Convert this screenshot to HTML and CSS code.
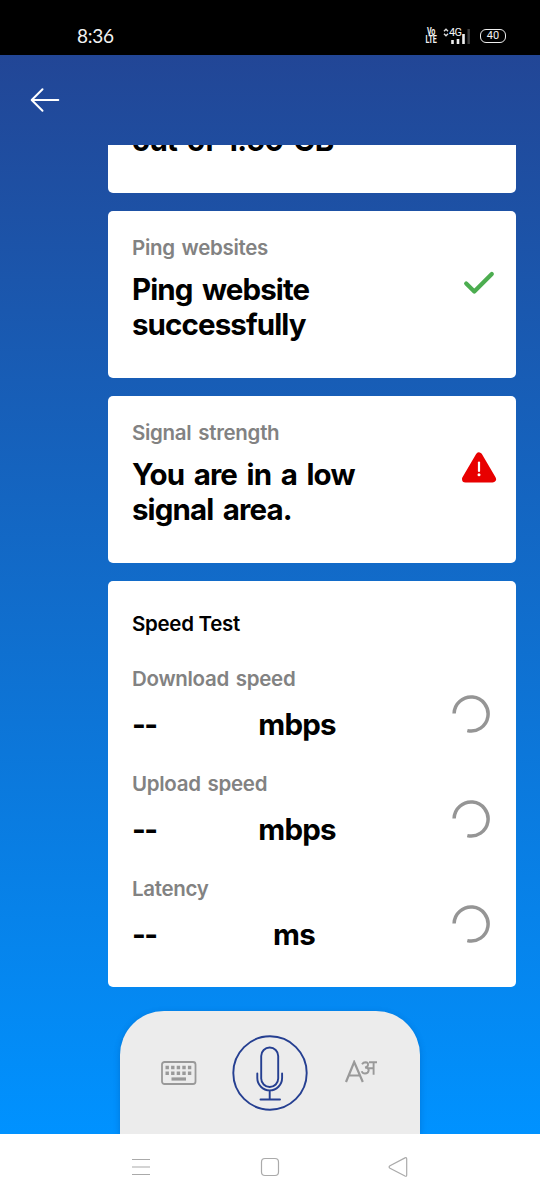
FILE: index.html
```html
<!DOCTYPE html>
<html lang="en">
<head>
<meta charset="utf-8">
<title>Network check</title>
<link rel="stylesheet" href="styles.css">
</head>
<body>
<div class="phone">
  <header class="status">
    <span class="clock">8:36</span>
    <div class="indicators">
      <span class="volte"><span>Vo</span><span>LTE</span></span>
      <div class="signal">
        <svg class="updown" width="6" height="9" viewBox="0 0 6 9"><path d="M1 3.2 3 1.2 5 3.2M1 5.8 3 7.8 5 5.8" fill="none" stroke="#ddd" stroke-width="1.4"/></svg>
        <span class="net">4G</span>
        <svg class="bars" width="20" height="15" viewBox="0 0 20 15"><path d="M2.500 11v4M8 10v5M13.500 5v10" stroke="#eee" stroke-width="2.600"/><path d="M18.700 0v15" stroke="#3c3c3c" stroke-width="2.400"/></svg>
      </div>
      <div class="battery"><span class="level">40</span></div>
    </div>
  </header>

  <main class="screen">
    <nav class="topbar">
      <svg width="30" height="26" viewBox="0 0 30 26"><path d="M28.300 13H2M12.500 2.200 1.700 13 12.500 23.800" fill="none" stroke="#fff" stroke-width="2" stroke-linecap="round" stroke-linejoin="round"/></svg>
    </nav>

    <div class="feed">
      <section class="card usage"><p class="title">out of 1.50 GB</p></section>

      <section class="card result">
        <div class="copy">
          <p class="label">Ping websites</p>
          <p class="title">Ping website<br>successfully</p>
        </div>
        <svg class="check" width="32" height="26" viewBox="0 0 32 26"><path d="M3.200 13.500 11.300 21.600 28.800 4" fill="none" stroke="#4cad50" stroke-width="4.200" stroke-linecap="round" stroke-linejoin="round"/></svg>
      </section>

      <section class="card result">
        <div class="copy">
          <p class="label">Signal strength</p>
          <p class="title">You are in a low<br>signal area.</p>
        </div>
        <svg class="alert" width="34" height="31" viewBox="0 0 34 31"><path d="M17 4 30.500 27H3.500Z" fill="#e80000" stroke="#e80000" stroke-width="7" stroke-linejoin="round"/><path d="M17 10.500v8.500" stroke="#fff" stroke-width="2.200" stroke-linecap="round"/><circle cx="17" cy="22.800" r="1.500" fill="#fff"/></svg>
      </section>

      <section class="card speed">
        <h2 class="heading">Speed Test</h2>
        <div class="metric">
          <div class="reading"><p class="label">Download speed</p><p class="value"><span class="amount">--</span><span class="unit">mbps</span></p></div>
          <svg class="spinner" width="40" height="40" viewBox="0 0 40 40"><path d="M3.100 19.500A17 17 0 1 1 16.300 36.600" fill="none" stroke="#959595" stroke-width="3.500"/></svg>
        </div>
        <div class="metric">
          <div class="reading"><p class="label">Upload speed</p><p class="value"><span class="amount">--</span><span class="unit">mbps</span></p></div>
          <svg class="spinner" width="40" height="40" viewBox="0 0 40 40"><path d="M3.100 19.500A17 17 0 1 1 16.300 36.600" fill="none" stroke="#959595" stroke-width="3.500"/></svg>
        </div>
        <div class="metric">
          <div class="reading"><p class="label">Latency</p><p class="value"><span class="amount">--</span><span class="unit unit-ms">ms</span></p></div>
          <svg class="spinner" width="40" height="40" viewBox="0 0 40 40"><path d="M3.100 19.500A17 17 0 1 1 16.300 36.600" fill="none" stroke="#959595" stroke-width="3.500"/></svg>
        </div>
      </section>
    </div>

    <div class="dock">
      <svg class="keyboard" width="36" height="24" viewBox="0 0 36 24"><rect x="1" y="1" width="33.500" height="22" rx="2.500" fill="none" stroke="#999" stroke-width="1.800"/><path d="M4.500 6.500h26M4.500 12.200h26" stroke="#999" stroke-width="3.400" stroke-dasharray="3.400 2.200"/><path d="M10.500 18h14.500" stroke="#999" stroke-width="3.200"/></svg>
      <svg class="mic" width="76" height="76" viewBox="0 0 76 76" fill="none" stroke="#253f91" stroke-width="1.900"><circle cx="38" cy="38" r="36.700"/><rect x="29.200" y="12.500" width="17" height="39.500" rx="8.500"/><path d="M25.300 38.500v4.500a12.400 12.400 0 0 0 24.800 0V38.500M37.700 55.400v9.100M28.500 64.500H48" stroke-linecap="round"/></svg>
      <svg class="language" width="34" height="24" viewBox="0 0 34 24" fill="none" stroke="#999"><path d="M2 22 10.200 2 18.800 22M5.300 15.500h10.300" stroke-width="2.200"/><path d="M18 4.200Q19.300 2.200 21.500 2.200 24.500 2.400 24 5 23.600 7.200 21 7.500 24.700 7.500 24.700 10.300 24.300 13.500 21 13.500 18.500 13.500 17.700 11.200M24 8.200h5.500M25 2.200h8M29.600 2.200v12.500" stroke-width="1.900"/></svg>
    </div>
  </main>

  <footer class="sysnav">
    <svg width="20" height="20" viewBox="0 0 20 20"><path d="M1 2.500h18M1 10h18M1 17.500h18" stroke="#aaa" stroke-width="1.100"/></svg>
    <svg width="20" height="20" viewBox="0 0 20 20"><rect x="1.500" y="1.500" width="17" height="17" rx="3.500" fill="none" stroke="#aaa" stroke-width="1.200"/></svg>
    <svg width="20" height="20" viewBox="0 0 20 20"><path d="M17 .9Q18.700.2 18.700 2v16Q18.700 19.800 17 19L2 11.200Q.2 10 2 8.800Z" fill="none" stroke="#aaa" stroke-width="1.200"/></svg>
  </footer>
</div>
</body>
</html>
```
FILE: styles.css
```css
* { box-sizing: border-box; }
body, p, h2 { margin: 0; }
svg { display: block; flex: none; }
body { font-family: Inter, "Liberation Sans", sans-serif; color: #000; }

.phone { width: 540px; height: 1200px; display: flex; flex-direction: column; overflow: hidden; }

.status { height: 55px; padding: 17px 34px 0 77px; background: #000; color: #f2f2f2; display: flex; align-items: center; justify-content: space-between; }
.clock { font: 400 19px/20px Lato, sans-serif; letter-spacing: -0.3px; }
.indicators { display: flex; align-items: center; }
.volte { display: flex; flex-direction: column; width: 16px; font: 700 10px/8px Roboto, sans-serif; letter-spacing: -0.3px; transform: scaleX(.72); align-items: center; }
.signal { display: flex; width: 28px; height: 16px; margin-left: 4px; position: relative; }
.net { font: 400 11px/9px Roboto, sans-serif; letter-spacing: -0.700px; }
.bars { position: absolute; left: 7px; top: 1px; }
.battery { width: 26px; height: 14px; margin-left: 9px; border: 1.500px solid #eee; border-radius: 6px; display: grid; place-items: center; }
.level { font: 400 11px/10px Roboto, sans-serif; }

.screen { height: 1079px; display: flex; flex-direction: column; background: linear-gradient(#224696, #0092ff); }
.topbar { height: 90px; padding: 32px 0 0 30px; }
.feed { height: 842px; padding: 0 24px 0 108px; display: flex; flex-direction: column; gap: 18px; overflow: hidden; }
.card { background: #fff; border-radius: 5px; padding: 25px 20px 0 24px; flex: none; }
.usage { height: 48px; padding-top: 0; border-radius: 0 0 5px 5px; overflow: hidden; }
.usage .title { margin-top: -22px; letter-spacing: -0.700px; }
.result { height: 167px; display: flex; justify-content: space-between; }
.label, .heading { font-size: 20.500px; font-weight: 600; line-height: 24px; letter-spacing: -0.300px; word-spacing: 2px; white-space: nowrap; }
.label { color: #828282; }
.title, .value { font-size: 29.500px; font-weight: 700; line-height: 35px; letter-spacing: -0.900px; word-spacing: 3.500px; white-space: nowrap; }
.result .title { margin-top: 12px; }
.check { margin: 34px 1px 0 0; }
.alert { margin: 31px 0.500px 0 0; overflow: visible; }

.speed { height: 406px; padding-top: 31px; }
.heading { margin-bottom: 31px; word-spacing: 0; }
.metric { height: 105px; display: flex; justify-content: space-between; }
.value { margin-top: 16px; display: grid; grid-template-columns: 120px 90px; letter-spacing: -0.800px; }
.amount { letter-spacing: -1.500px; }
.unit { justify-self: center; }
.unit-ms { margin-right: 6px; }
.spinner { margin: 27px 5px 0 0; }

.dock { width: 300px; height: 123px; margin: 24px auto 0; padding: 23px 42px 0 41px; background: #ececec; border-radius: 44px 44px 0 0; box-shadow: 0 2px 6px rgba(0, 45, 110, .25); display: flex; justify-content: space-between; align-items: flex-start; }
.keyboard { margin-top: 27px; }
.mic { margin: 0.500px 2px 0 0; }
.language { margin-top: 26px; }

.sysnav { height: 66px; padding: 0 132px 0 131px; background: #fff; display: flex; align-items: center; justify-content: space-between; }
```
